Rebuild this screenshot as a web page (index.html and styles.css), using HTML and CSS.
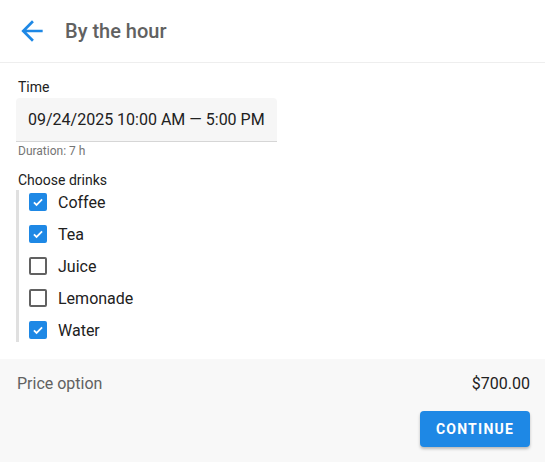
FILE: index.html
```html
<!DOCTYPE html>
<html>
<head>
<meta charset="utf-8">
<link rel="stylesheet" href="styles.css">
</head>
<body>
<div class="page">
  <header class="header">
    <svg class="back" viewBox="0 0 24 24" width="32" height="32"><path fill="#1e88e5" d="M20 11H7.83l5.59-5.59L12 4l-8 8 8 8 1.41-1.41L7.83 13H20v-2z"/></svg>
    <h1 class="title">By the hour</h1>
  </header>
  <main class="content">
    <div class="label">Time</div>
    <div class="field">09/24/2025 10:00 AM — 5:00 PM</div>
    <div class="hint">Duration: 7 h</div>
    <div class="label drinks-label">Choose drinks</div>
    <div class="group">
      <label class="row"><span class="box checked"><svg viewBox="0 0 24 24"><polyline points="5,12.5 9.5,17 19,7.5" fill="none" stroke="#fff" stroke-width="3"/></svg></span>Coffee</label>
      <label class="row"><span class="box checked"><svg viewBox="0 0 24 24"><polyline points="5,12.5 9.5,17 19,7.5" fill="none" stroke="#fff" stroke-width="3"/></svg></span>Tea</label>
      <label class="row"><span class="box"></span>Juice</label>
      <label class="row"><span class="box"></span>Lemonade</label>
      <label class="row"><span class="box checked"><svg viewBox="0 0 24 24"><polyline points="5,12.5 9.5,17 19,7.5" fill="none" stroke="#fff" stroke-width="3"/></svg></span>Water</label>
    </div>
  </main>
  <footer class="footer">
    <div class="price-row">
      <span class="price-label">Price option</span>
      <span class="price">$700.00</span>
    </div>
    <div class="actions">
      <button class="btn">CONTINUE</button>
    </div>
  </footer>
</div>
</body>
</html>
```

FILE: styles.css
```css
html, body {
  margin: 0;
  padding: 0;
  background: #fff;
  font-family: Roboto, "Liberation Sans", sans-serif;
  color: #212121;
}
.page {
  width: 545px;
  height: 462px;
  display: flex;
  flex-direction: column;
}
.header {
  height: 62px;
  border-bottom: 1px solid #eeeeee;
  display: flex;
  align-items: center;
  padding-left: 16px;
}
.back {
  display: block;
  margin-right: 17px;
}
.title {
  margin: 0;
  font-size: 20px;
  font-weight: 500;
  color: #616161;
}
.content {
  flex: 1;
  padding: 14px 16px 16px;
  display: flex;
  flex-direction: column;
  align-items: flex-start;
}
.label {
  font-size: 14px;
  line-height: 20px;
  padding-left: 2px;
  color: #212121;
}
.field {
  margin-top: 1px;
  width: 261px;
  box-sizing: border-box;
  height: 44px;
  padding: 0 12px;
  display: flex;
  align-items: center;
  font-size: 16px;
  background: #f6f6f6;
  border-radius: 4px 4px 0 0;
  border-bottom: 1px solid #d6d6d6;
  color: #212121;
}
.hint {
  font-size: 12px;
  line-height: 16px;
  margin-top: 1px;
  padding-left: 2px;
  color: #757575;
}
.drinks-label {
  margin-top: 11px;
}
.group {
  margin-top: 0;
  border-left: 3px solid #e0e0e0;
  padding-left: 10px;
  display: flex;
  flex-direction: column;
  gap: 8px;
}
.row {
  height: 24px;
  display: flex;
  align-items: center;
  font-size: 16px;
  color: #212121;
}
.box {
  width: 18px;
  height: 18px;
  box-sizing: border-box;
  border: 2px solid #616161;
  border-radius: 2px;
  margin-right: 11px;
  display: flex;
  align-items: center;
  justify-content: center;
}
.box.checked {
  background: #1e88e5;
  border-color: #1e88e5;
}
.box svg {
  width: 14px;
  height: 14px;
}
.footer {
  height: 103px;
  background: #f8f8f8;
  padding: 13px 15px 15px 17px;
  box-sizing: border-box;
  display: flex;
  flex-direction: column;
}
.price-row {
  display: flex;
  justify-content: space-between;
  align-items: center;
  font-size: 16px;
  line-height: 24px;
}
.price-label {
  color: #616161;
}
.price {
  color: #212121;
}
.actions {
  margin-top: 15px;
  display: flex;
  justify-content: flex-end;
}
.btn {
  width: 110px;
  height: 36px;
  border: none;
  border-radius: 4px;
  background: #1e88e5;
  color: #fff;
  font-family: Roboto, "Liberation Sans", sans-serif;
  font-size: 14px;
  font-weight: 700;
  letter-spacing: 1.25px;
  box-shadow: 0 2px 3px rgba(0,0,0,0.25);
  padding: 0;
}
```
